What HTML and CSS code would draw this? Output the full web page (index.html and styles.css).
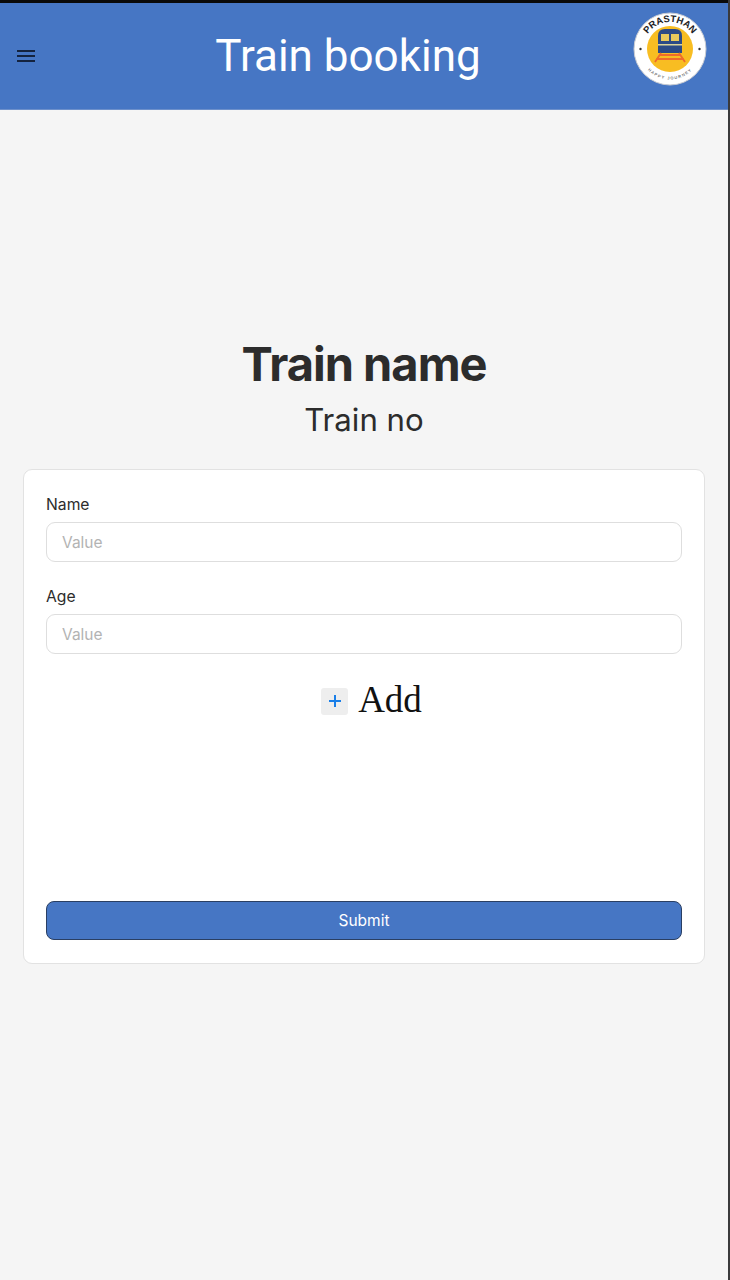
FILE: index.html
```html
<!DOCTYPE html>
<html lang="en">
<head>
<meta charset="utf-8">
<title>Train booking</title>
<link rel="stylesheet" href="styles.css">
</head>
<body>
<div class="screen">
  <header class="appbar">
    <button class="menu" aria-label="Menu">
      <svg viewBox="0 0 20 14" width="20" height="14"><path d="M1 2h18M1 7h18M1 12h18" stroke="#14233f" stroke-width="1.800" fill="none"/></svg>
    </button>
    <h1 class="appbar-title">Train booking</h1>
    <svg class="logo" viewBox="0 0 74 74" width="74" height="74">
      <defs>
        <path id="arcTop" d="M10 37a27 27 0 0 1 54 0"/>
        <path id="arcBottom" d="M6.500 37a30.500 30.500 0 0 0 61 0"/>
      </defs>
      <circle cx="37" cy="37" r="36" fill="#fff" stroke="#c9ccd2" stroke-width="1"/>
      <circle cx="37" cy="37" r="23" fill="#f8bd22"/>
      <text class="logo-top"><textPath href="#arcTop" startOffset="50%" text-anchor="middle">PRASTHAN</textPath></text>
      <text class="logo-bottom"><textPath href="#arcBottom" startOffset="50%" text-anchor="middle">HAPPY JOURNEY</textPath></text>
      <circle cx="7.500" cy="37" r="1.200" fill="#333"/>
      <circle cx="66.500" cy="37" r="1.200" fill="#333"/>
      <path d="M25 41V24q0-7 7-7h10q7 0 7 7v17z" fill="#2c4a86"/>
      <rect x="28" y="22" width="8" height="7" fill="#e9c95c"/>
      <rect x="38" y="22" width="8" height="7" fill="#e9c95c"/>
      <rect x="25" y="32" width="24" height="1.500" fill="#dcd49a"/>
      <path d="M28 41 22 50M46 41 52 50" stroke="#ef6a2c" stroke-width="1.800" fill="none"/>
      <path d="M26 43h22M23.500 47h27" stroke="#ef6a2c" stroke-width="1.800" fill="none"/>
    </svg>
  </header>
  <main class="content">
    <h2 class="train-name">Train name</h2>
    <p class="train-no">Train no</p>
    <form class="card">
      <div class="fields">
        <label class="field">
          <span class="field-label">Name</span>
          <input class="input" type="text" placeholder="Value">
        </label>
        <label class="field">
          <span class="field-label">Age</span>
          <input class="input" type="text" placeholder="Value">
        </label>
      </div>
      <div class="add-row">
        <span class="add-icon">
          <svg viewBox="0 0 14 14" width="14" height="14"><path d="M7 1v12M1 7h12" stroke="#1a7fe8" stroke-width="2" fill="none"/></svg>
        </span>
        <span class="add-label">Add</span>
      </div>
      <button class="submit" type="button">Submit</button>
    </form>
  </main>
</div>
</body>
</html>
```
FILE: styles.css
```css
* { box-sizing: border-box; }
html, body { margin: 0; height: 100%; }
body { background: #3a3a3c; font-family: Inter, "Liberation Sans", sans-serif; }
.screen {
  width: 728px;
  height: 1280px;
  display: flex;
  flex-direction: column;
  background: #f5f5f5;
}
.appbar {
  height: 110px;
  flex: none;
  border-top: 3px solid #0a0a0a;
  border-bottom: 1px solid #6d90cb;
  background: #4676c4;
  display: flex;
  align-items: center;
  justify-content: space-between;
  padding: 0 21px 0 16px;
}
.menu {
  width: 20px;
  height: 14px;
  padding: 0;
  border: 0;
  background: none;
  display: block;
  line-height: 0;
}
.appbar-title {
  margin: 0 0 0 27px;
  font: 400 44px/1.2 Roboto, sans-serif;
  color: #fff;
}
.logo { display: block; margin-top: -14px; }
.logo-top { font: 700 9.500px "Liberation Sans", sans-serif; fill: #1d1d1f; }
.logo-bottom { font: 700 4px "Liberation Sans", sans-serif; fill: #777; letter-spacing: 1.200px; }
.content {
  flex: 1;
  display: flex;
  flex-direction: column;
  align-items: center;
  padding: 225px 23px 0;
}
.train-name {
  margin: 0;
  font: 700 47px/58px Inter, sans-serif;
  letter-spacing: -1px;
  color: #2c2c2c;
}
.train-no {
  margin: 7px 0 0;
  font: 400 31.200px/40px Inter, sans-serif;
  color: #2c2c2c;
}
.card {
  width: 682px;
  height: 495px;
  margin-top: 29px;
  padding: 24px 22px 23px;
  background: #fff;
  border: 1px solid #e2e2e2;
  border-radius: 9px;
  display: flex;
  flex-direction: column;
}
.fields { display: flex; flex-direction: column; gap: 24px; }
.field { display: flex; flex-direction: column; gap: 6px; }
.field-label { font-size: 15.700px; line-height: 22px; color: #2c2c2c; }
.input {
  height: 40px;
  width: 100%;
  padding: 0 15px;
  font: 400 15.500px Inter, sans-serif;
  border: 1px solid #dedede;
  border-radius: 9px;
  background: #fff;
  color: #2c2c2c;
}
.input::placeholder { color: #b3b3b3; opacity: 1; }
.add-row {
  margin-top: 25px;
  padding-left: 15px;
  display: flex;
  align-items: center;
  justify-content: center;
  gap: 10px;
}
.add-icon {
  width: 27px;
  height: 27px;
  background: #eeeeee;
  border-radius: 3px;
  display: flex;
  align-items: center;
  justify-content: center;
}
.add-label {
  margin-bottom: 2px;
  font: 400 37px/42px "Liberation Serif", serif;
  color: #111;
}
.submit {
  margin-top: auto;
  height: 39px;
  width: 100%;
  background: #4676c4;
  border: 1px solid #2a3f63;
  border-radius: 8px;
  color: #fff;
  font: 400 15.500px Inter, sans-serif;
}
```
